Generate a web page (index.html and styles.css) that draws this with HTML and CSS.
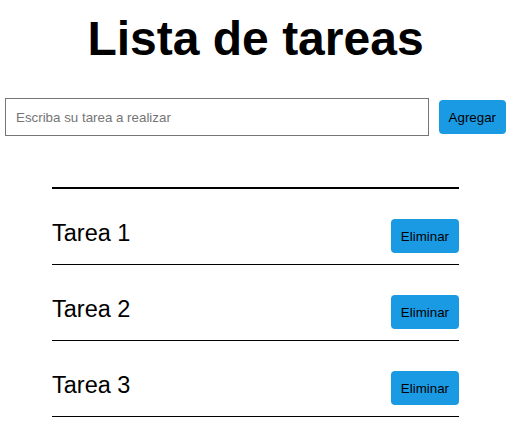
FILE: index.html
```html
<!DOCTYPE html>
<html lang="es">
<head>
<meta charset="utf-8">
<title>Lista de tareas</title>
<link rel="stylesheet" href="styles.css">
</head>
<body>
<div class="app">
  <h1 class="title">Lista de tareas</h1>
  <form class="add-form">
    <input class="task-input" type="text" placeholder="Escriba su tarea a realizar">
    <button class="btn" type="button">Agregar</button>
  </form>
  <ul class="task-list">
    <li class="task"><span class="task-name">Tarea 1</span><button class="btn" type="button">Eliminar</button></li>
    <li class="task"><span class="task-name">Tarea 2</span><button class="btn" type="button">Eliminar</button></li>
    <li class="task"><span class="task-name">Tarea 3</span><button class="btn" type="button">Eliminar</button></li>
  </ul>
</div>
</body>
</html>
```
FILE: styles.css
```css
html, body {
  margin: 0;
  padding: 0;
  background: #fff;
}
body {
  font-family: "Liberation Sans", Arial, sans-serif;
  color: #000;
}
.app {
  padding: 11px 8px 0 5px;
}
.title {
  margin: 0 0 32px;
  font-size: 48px;
  line-height: 55px;
  font-weight: bold;
  text-align: center;
}
.add-form {
  display: flex;
  align-items: center;
  gap: 10px;
  margin: 0;
}
.task-input {
  flex: 1;
  box-sizing: border-box;
  height: 38px;
  border: 1px solid #767676;
  border-radius: 0;
  padding: 0 10px;
  font-family: "Liberation Sans", Arial, sans-serif;
  font-size: 13.33px;
  color: #000;
  outline: none;
}
.task-input::placeholder {
  color: #757575;
}
.btn {
  box-sizing: border-box;
  height: 34px;
  padding: 0 10px;
  border: none;
  border-radius: 4px;
  background: #1a9ae3;
  color: #000;
  font-family: "Liberation Sans", Arial, sans-serif;
  font-size: 13.33px;
  cursor: pointer;
}
.task-list {
  list-style: none;
  width: 407px;
  margin: 51px auto 0;
  padding: 0;
  border-top: 2px solid #000;
}
.task {
  display: flex;
  justify-content: space-between;
  align-items: flex-start;
  padding: 30px 0 11px;
  border-bottom: 1px solid #000;
}
.task-name {
  margin-top: 1px;
  font-size: 23.5px;
  line-height: 27px;
}
```
